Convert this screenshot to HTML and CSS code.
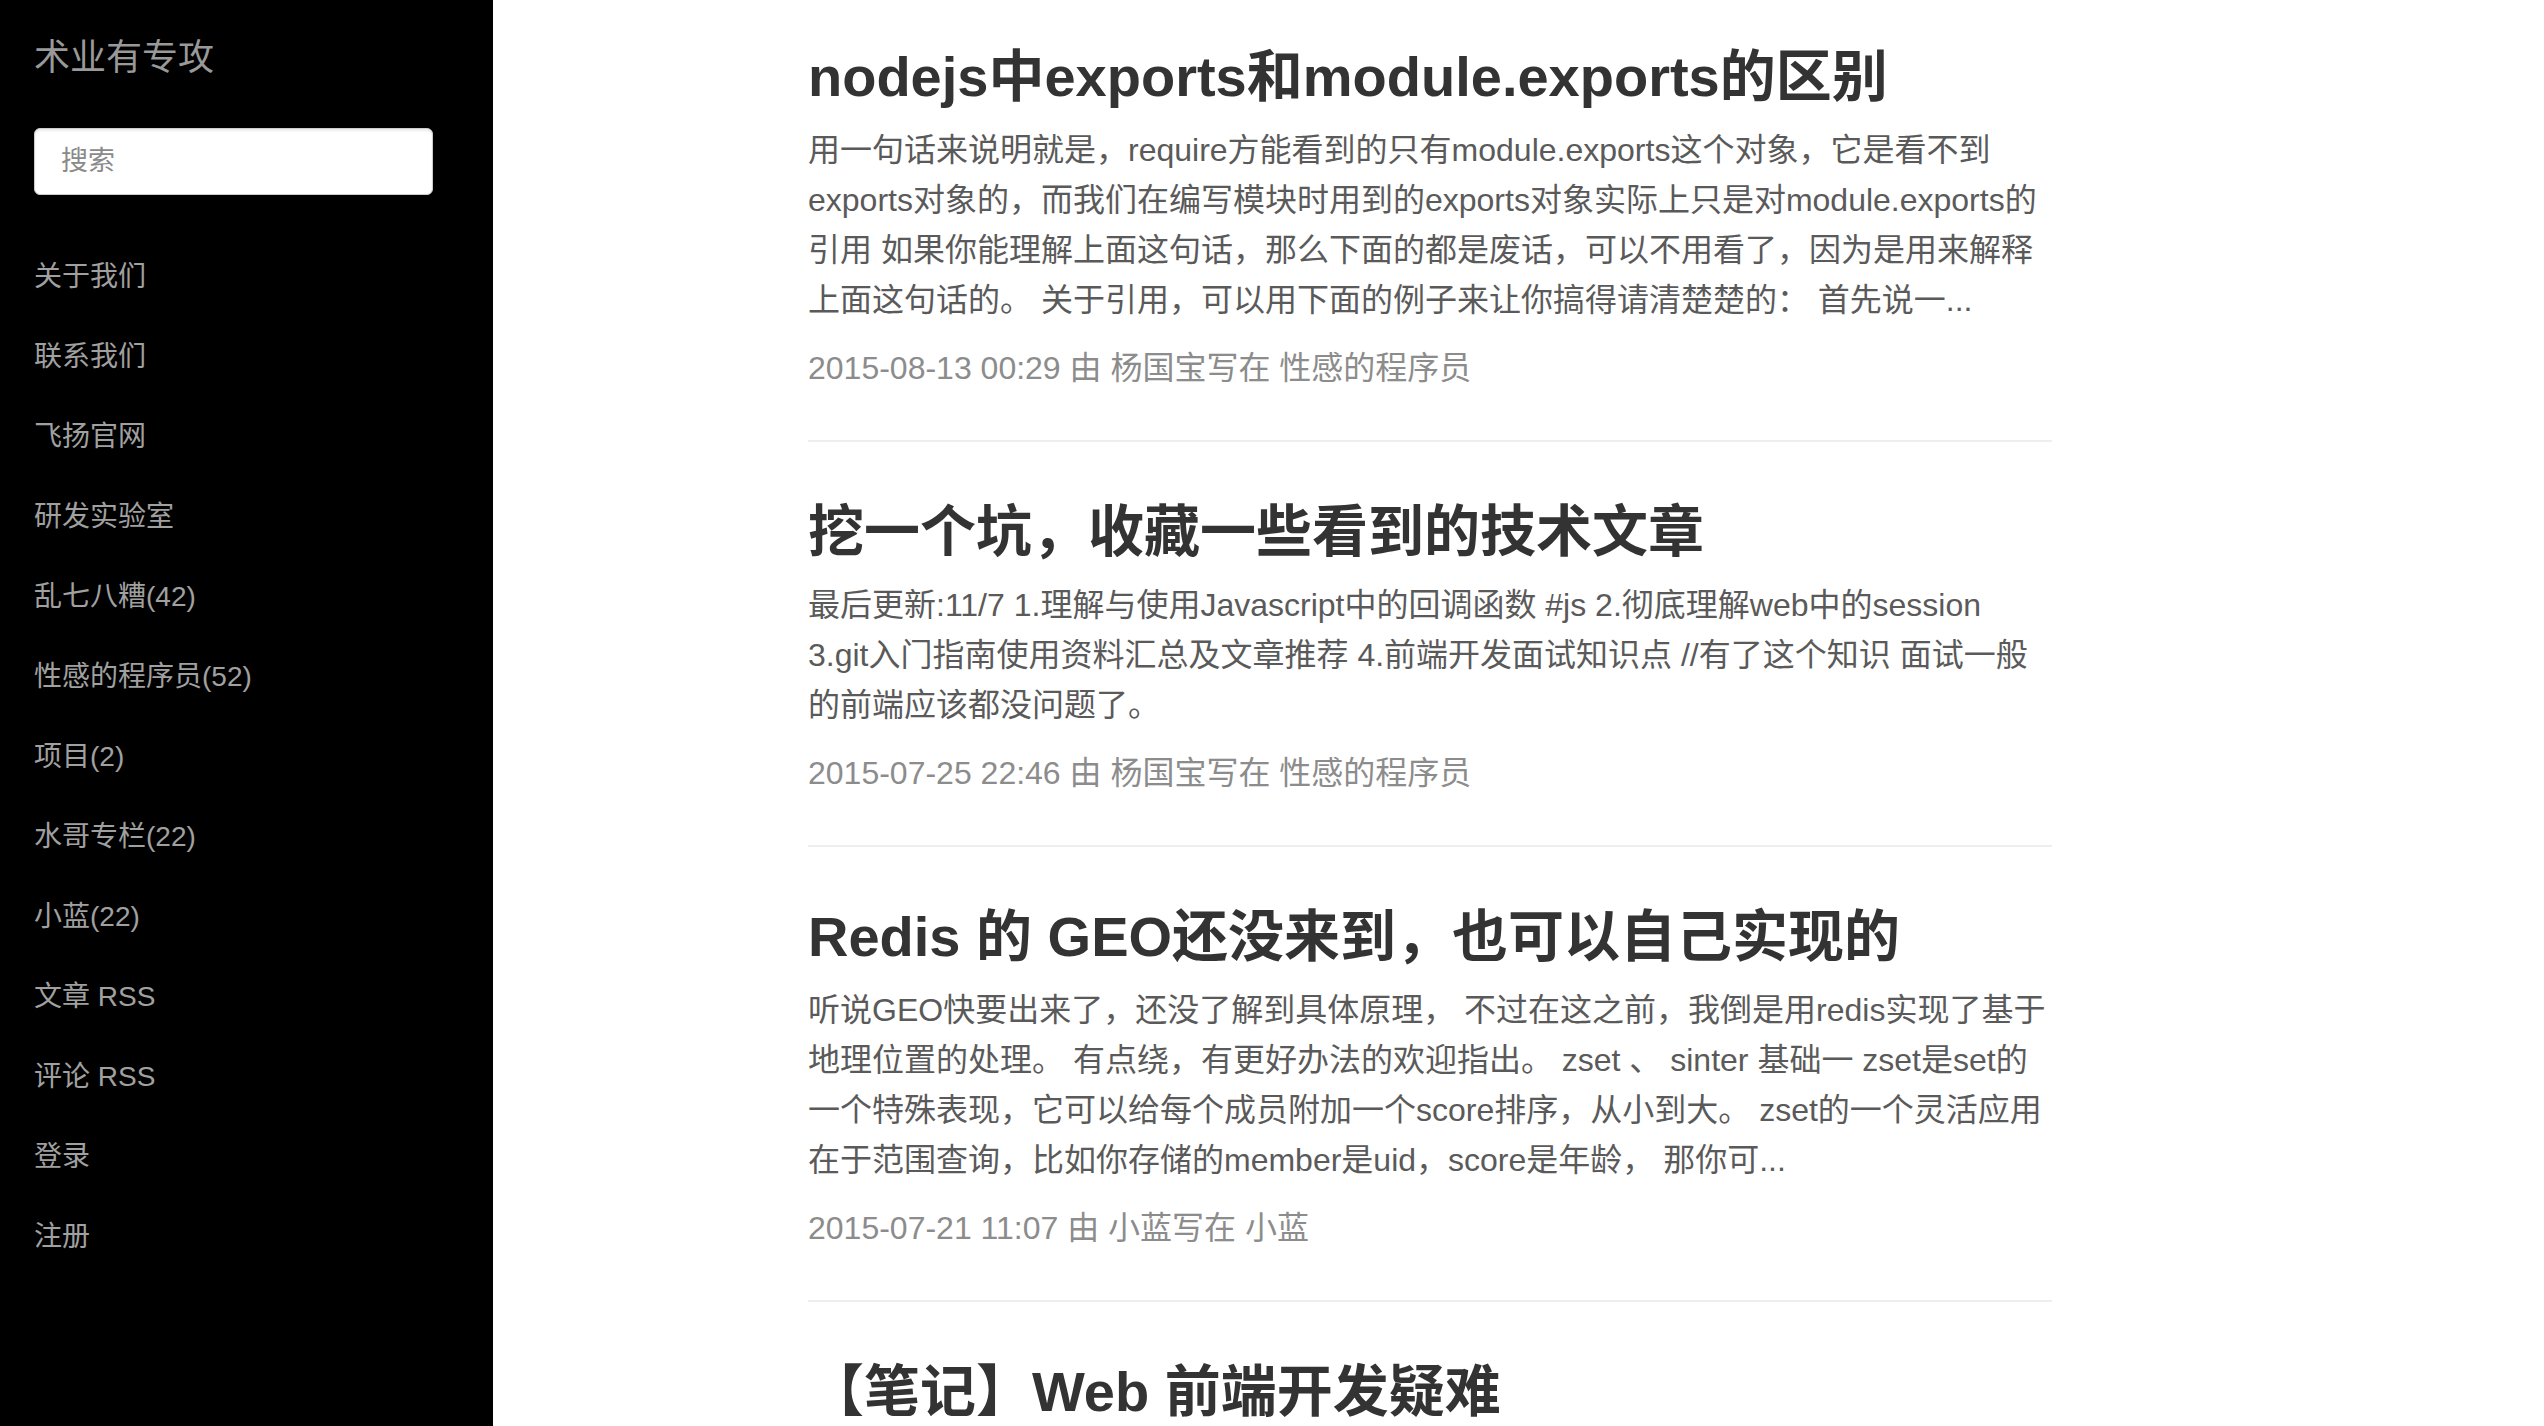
FILE: index.html
```html
<!DOCTYPE html>
<html lang="zh-CN">
<head>
<meta charset="utf-8">
<title>术业有专攻</title>
<link rel="stylesheet" href="styles.css">
</head>
<body>
<div class="page">
  <aside class="sidebar">
    <h1 class="site-title">术业有专攻</h1>
    <input class="search" type="text" placeholder="搜索">
    <ul class="nav">
      <li><a href="#">关于我们</a></li>
      <li><a href="#">联系我们</a></li>
      <li><a href="#">飞扬官网</a></li>
      <li><a href="#">研发实验室</a></li>
      <li><a href="#">乱七八糟(42)</a></li>
      <li><a href="#">性感的程序员(52)</a></li>
      <li><a href="#">项目(2)</a></li>
      <li><a href="#">水哥专栏(22)</a></li>
      <li><a href="#">小蓝(22)</a></li>
      <li><a href="#">文章 RSS</a></li>
      <li><a href="#">评论 RSS</a></li>
      <li><a href="#">登录</a></li>
      <li><a href="#">注册</a></li>
    </ul>
  </aside>
  <main class="main">
    <article class="post">
      <h2 class="post-title">nodejs中exports和module.exports的区别</h2>
      <p class="post-body">用一句话来说明就是，require方能看到的只有module.exports这个对象，它是看不到exports对象的，而我们在编写模块时用到的exports对象实际上只是对module.exports的引用 如果你能理解上面这句话，那么下面的都是废话，可以不用看了，因为是用来解释上面这句话的。 关于引用，可以用下面的例子来让你搞得请清楚楚的： 首先说一...</p>
      <p class="post-meta">2015-08-13 00:29 由 杨国宝写在 性感的程序员</p>
    </article>
    <article class="post">
      <h2 class="post-title">挖一个坑，收藏一些看到的技术文章</h2>
      <p class="post-body">最后更新:11/7 1.理解与使用Javascript中的回调函数 #js 2.彻底理解web中的session 3.git入门指南使用资料汇总及文章推荐 4.前端开发面试知识点 //有了这个知识 面试一般的前端应该都没问题了。</p>
      <p class="post-meta">2015-07-25 22:46 由 杨国宝写在 性感的程序员</p>
    </article>
    <article class="post">
      <h2 class="post-title">Redis 的 GEO还没来到，也可以自己实现的</h2>
      <p class="post-body">听说GEO快要出来了，还没了解到具体原理， 不过在这之前，我倒是用redis实现了基于地理位置的处理。 有点绕，有更好办法的欢迎指出。 zset 、 sinter 基础一 zset是set的一个特殊表现，它可以给每个成员附加一个score排序，从小到大。 zset的一个灵活应用在于范围查询，比如你存储的member是uid，score是年龄， 那你可...</p>
      <p class="post-meta">2015-07-21 11:07 由 小蓝写在 小蓝</p>
    </article>
    <article class="post">
      <h2 class="post-title">【笔记】Web 前端开发疑难</h2>
    </article>
  </main>
</div>
</body>
</html>
```

FILE: styles.css
```css
html, body {
  margin: 0;
  padding: 0;
  height: 100%;
  background: #fff;
}

body {
  font-family: "Liberation Sans", "Noto Sans CJK SC", sans-serif;
  overflow: hidden;
}

.page {
  display: flex;
  height: 100vh;
  overflow: hidden;
}

.sidebar {
  width: 493px;
  flex: 0 0 493px;
  background: #000;
  box-sizing: border-box;
  padding: 38px 60px 0 34px;
}

.site-title {
  margin: 0;
  font-size: 36px;
  line-height: 40px;
  font-weight: normal;
  color: #999;
}

.search {
  display: block;
  box-sizing: border-box;
  width: 399px;
  height: 67px;
  margin-top: 50px;
  padding: 0 26px;
  border: 1px solid #ccc;
  border-radius: 6px;
  background: #fff;
  box-shadow: inset 0 2px 2px rgba(0, 0, 0, 0.08);
  font-family: "Liberation Sans", "Noto Sans CJK SC", sans-serif;
  font-size: 27px;
  color: #555;
  outline: none;
}

.search::placeholder {
  color: #8a8a8a;
}

.nav {
  list-style: none;
  margin: 42px 0 0;
  padding: 0;
}

.nav li {
  line-height: 80px;
  height: 80px;
}

.nav a {
  color: #a0a0a0;
  font-size: 28px;
  text-decoration: none;
}

.main {
  flex: 1;
  padding: 46px 0 0 315px;
  box-sizing: border-box;
}

.post {
  width: 1244px;
  border-bottom: 2px solid #eee;
  padding-bottom: 47px;
  margin-bottom: 59px;
}

.post-title {
  margin: 0;
  font-size: 56px;
  line-height: 62px;
  font-weight: bold;
  color: #333;
}

.post-body {
  margin: 17px 5px 0 0;
  font-size: 32px;
  line-height: 50px;
  color: #5a5a5a;
}

.post-meta {
  margin: 18px 0 0;
  font-size: 32px;
  line-height: 50px;
  color: #8c8c8c;
}
```
